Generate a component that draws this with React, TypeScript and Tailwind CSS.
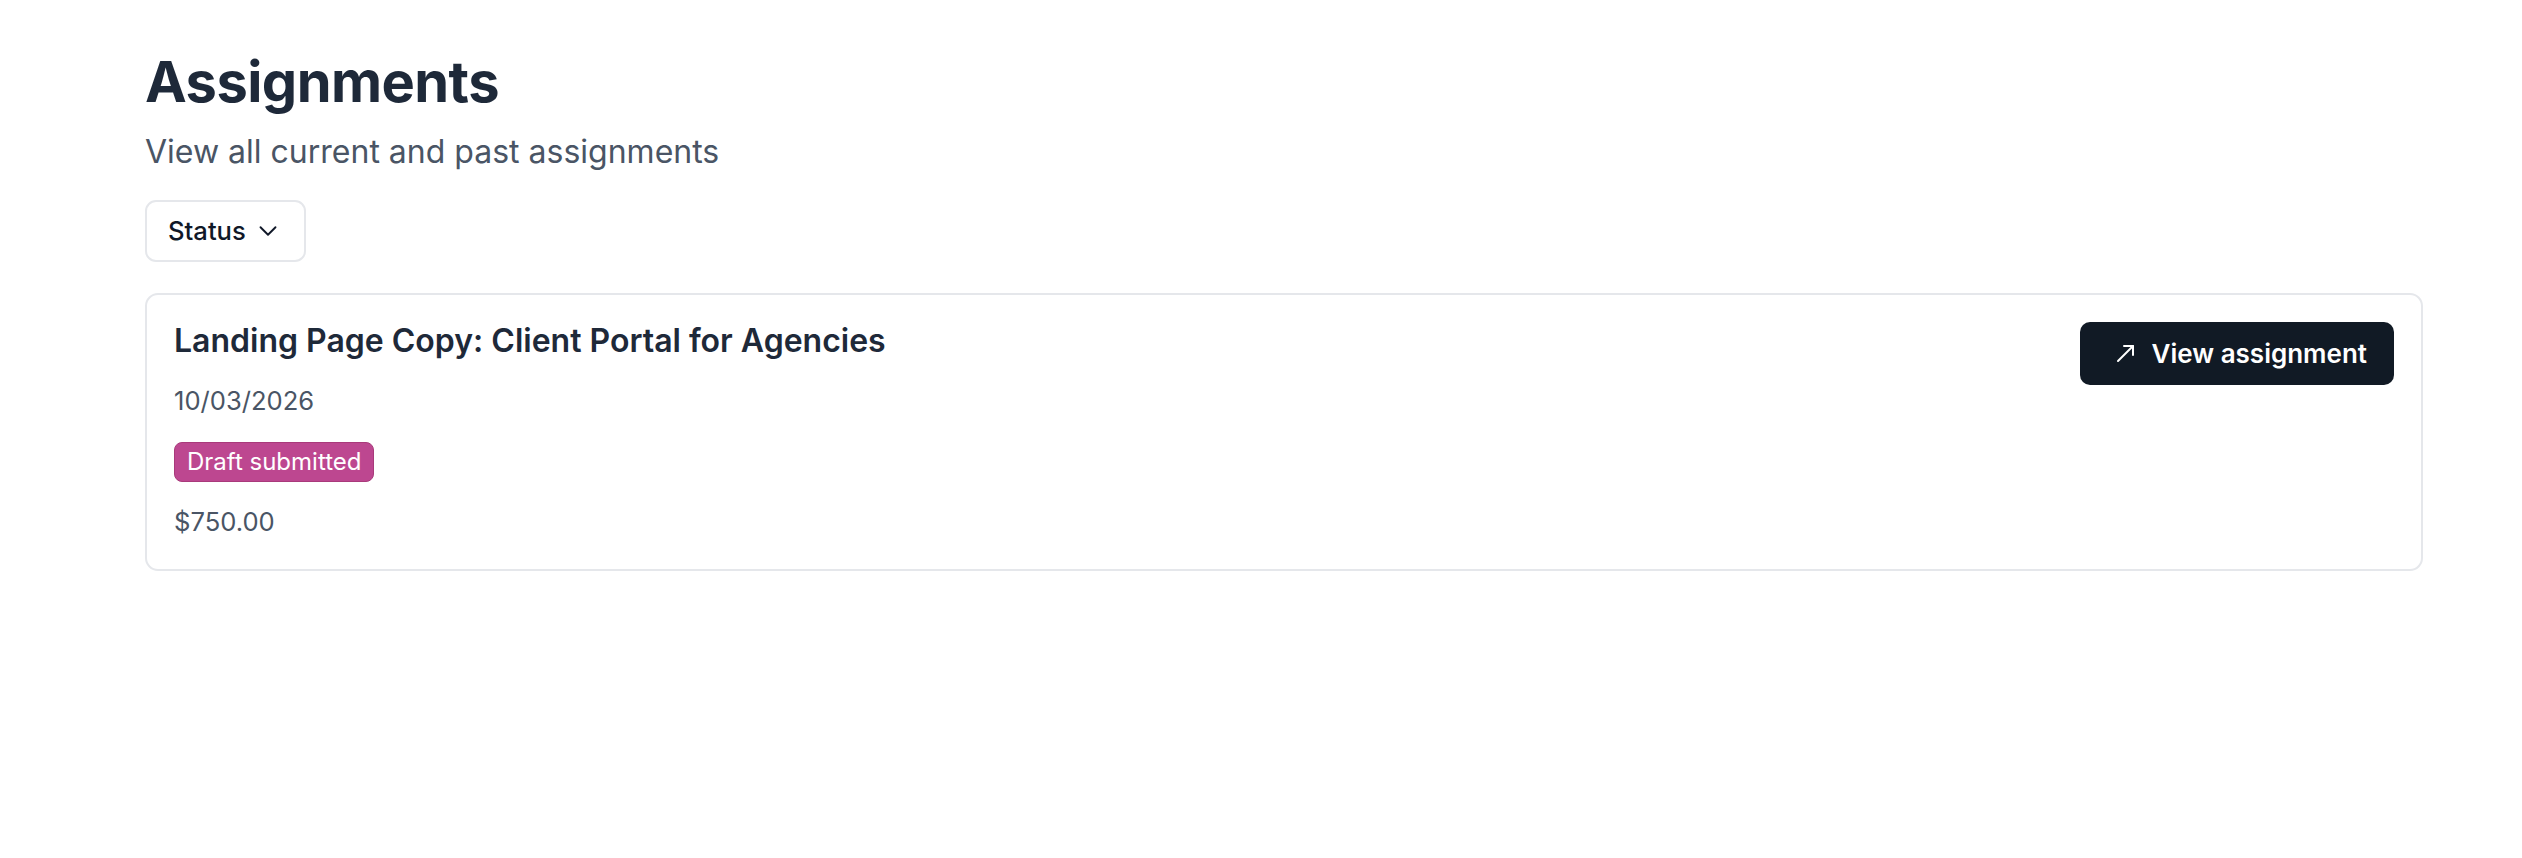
import React from "react";
import { ChevronDown } from "lucide-react";

function ArrowIcon() {
  return (
    <svg width="19" height="19" viewBox="0 0 19 19" fill="none" stroke="currentColor" strokeWidth="2" strokeLinecap="round" strokeLinejoin="round">
      <path d="M2 17L17 2" />
      <path d="M8 2H17V11" />
    </svg>
  );
}

export default function App() {
  return (
    <div className="min-h-screen bg-white pl-[145px] pr-[99px] pt-[52px] font-['Inter',sans-serif]">
      <h1 className="text-[56px] leading-[60px] font-bold text-[#1e2939] tracking-[-0.01em]">Assignments</h1>
      <p className="mt-[18px] text-[32px] leading-[44.8px] text-[#4a5565]">View all current and past assignments</p>
      <div className="mt-[25px]">
        <button className="flex h-[62px] w-[161px] items-center rounded-[11px] border-2 border-[#e5e7eb] bg-white pl-[21px] text-[25.6px] font-medium text-[#101828]">
          <span>Status</span>
          <ChevronDown size={30} strokeWidth={1.5} className="ml-[7px] text-[#101828]" />
        </button>
      </div>
      <div className="mt-[31px] flex items-start justify-between rounded-[13px] border-2 border-[#e5e7eb] px-[27px] pt-[27px] pb-[29px]">
        <div className="flex flex-col items-start">
          <h2 className="text-[32px] leading-[38px] font-semibold text-[#1e2939]">Landing Page Copy: Client Portal for Agencies</h2>
          <div className="mt-[23px] text-[25.6px] leading-[36px] text-[#4a5565]">10/03/2026</div>
          <span className="mt-[23px] inline-flex h-[40px] items-center rounded-[8px] border border-[#a93a7b] bg-[#bd4790] px-[12px] text-[24px] leading-[32px] text-white">Draft submitted</span>
          <div className="mt-[22px] text-[25.6px] leading-[36px] text-[#4a5565]">$750.00</div>
        </div>
        <button className="flex h-[63px] items-center gap-[17px] rounded-[10px] bg-[#111a25] pl-[36px] pr-[27px] text-[26px] font-semibold text-white">
          <ArrowIcon />
          <span>View assignment</span>
        </button>
      </div>
    </div>
  );
}
